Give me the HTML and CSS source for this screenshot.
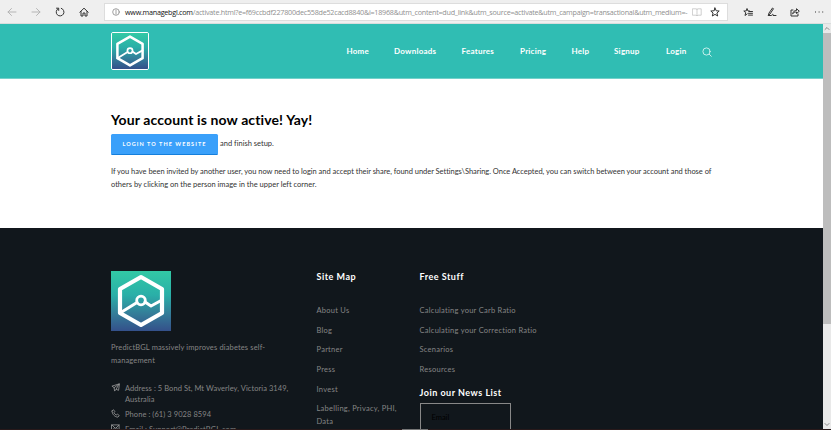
FILE: index.html
```html
<!DOCTYPE html>
<html lang="en">
<head>
<meta charset="utf-8">
<title>Account active</title>
<link rel="stylesheet" href="styles.css">
</head>
<body>
<svg class="defs" width="0" height="0">
  <defs>
    <linearGradient id="brand" x1="0" y1="0" x2="0" y2="1">
      <stop offset="0" stop-color="#32c9a5"/><stop offset=".4" stop-color="#2aafa8"/><stop offset=".72" stop-color="#347b98"/><stop offset="1" stop-color="#34508a"/>
    </linearGradient>
    <symbol id="logo" viewBox="0 0 60 60">
      <rect width="60" height="60" fill="url(#brand)"/>
      <g fill="none" stroke="#fff" stroke-linejoin="round">
        <path stroke-width="4.2" d="M30 6 51 18V42L30 54 9 42V18Z"/>
        <path stroke-width="3" d="M9 42 26 31.500M34 31 40 35 51 29"/>
        <circle cx="30" cy="29.500" r="4.300" stroke-width="2.800"/>
      </g>
    </symbol>
  </defs>
</svg>
<header class="browser">
  <div class="controls">
    <svg viewBox="0 0 10 10"><path class="dim" d="M9 5H1M4.500 1.500 1 5l3.500 3.500"/></svg>
    <svg viewBox="0 0 10 10"><path class="dim" d="M1 5h8M5.500 1.500 9 5 5.500 8.500"/></svg>
    <svg viewBox="0 0 10 10"><path d="M3 1.700A3.900 3.900 0 1 0 6.300 1.300M1.500 1.200H3.700V3.400"/></svg>
    <svg viewBox="0 0 10 10"><path d="M.8 5.200 5 1.200l4.200 4M2 4.500V9h2V6h2v3h2V4.500"/></svg>
  </div>
  <div class="address">
    <svg class="info" viewBox="0 0 8 8"><circle cx="4" cy="4" r="3.300"/><path d="M4 3.500V6M4 2v.7"/></svg>
    <div class="url"><span class="host">www.managebgl.com</span><span class="path">/activate.html?e=f69ccbdf227800dec558de52cacd8840&amp;i=18968&amp;utm_content=dud_link&amp;utm_source=activate&amp;utm_campaign=transactional&amp;utm_medium=-</span></div>
    <svg class="book" viewBox="0 0 10 10"><path d="M5 2v6.500M.8 1.800H4l1 .7 1-.7h3.200v6.400H6l-1 .6-1-.6H.8Z"/></svg>
    <svg class="star" viewBox="0 0 10 10"><path d="m5 1 1.200 2.800 3 .2-2.300 2 .8 3L5 7.400 2.300 9l.8-3L.8 4l3-.2Z"/></svg>
  </div>
  <div class="tools">
    <svg viewBox="0 0 10 10"><path d="M6.500 4H5L4 1.500 3.100 4H.8l1.900 1.700L2 8.500l2.200-1.600M6 4.500h3.500M5.500 6.300h4M5.500 8.100h4"/></svg>
    <svg viewBox="0 0 10 10"><path d="M1.300 8.500 2 6 5.500 1l1 .7L3 7 1.300 8.500h3.200C5.500 6.700 6.500 7 6 8.500h3"/></svg>
    <svg viewBox="0 0 10 10"><path d="M3 3H1v6h7V7M2.800 6.500C3 4.500 4.500 3.500 6.500 3.500V1.700L9.300 4.200 6.500 6.500V5C5 5 3.800 5.500 2.800 6.500Z"/></svg>
    <svg viewBox="0 0 10 10"><path class="dots" d="M1 5h1M4.600 5h1M8.200 5h1"/></svg>
  </div>
</header>
<div class="viewport">
  <div class="page">
    <nav class="navbar">
      <svg class="mark"><use href="#logo"/></svg>
      <div class="menu"><a>Home</a><a>Downloads</a><a>Features</a><a>Pricing</a><a>Help</a><a>Signup</a><a>Login</a>
        <svg class="search" viewBox="0 0 10 10"><circle cx="4.500" cy="4.500" r="3.600"/><path d="m7.300 7.300 2 2"/></svg>
      </div>
    </nav>
    <main>
      <h1>Your account is now active! Yay!</h1>
      <div class="action"><a class="button"><span>LOGIN TO THE WEBSITE</span></a><span class="setup">and finish setup.</span></div>
      <p><span class="first">If you have been invited by another user, you now need to login and accept their share, found under Settings\Sharing. Once Accepted, you can switch between your account and those of</span><br><span class="second">others by clicking on the person image in the upper left corner.</span></p>
    </main>
    <footer>
      <section class="about">
        <svg class="biglogo"><use href="#logo"/></svg>
        <p>PredictBGL massively improves diabetes self-<br>management</p>
        <ul>
          <li><svg viewBox="0 0 10 10"><path d="M9 1 1 3.500l2.500 1.700L4 9l1.700-2L8 8ZM3.500 5.200 9 1 5.700 7"/></svg><span>Address : 5 Bond St, Mt Waverley, Victoria 3149,<br>Australia</span></li>
          <li><svg viewBox="0 0 10 10"><path d="M1.200 2.200 2.800.8 4.300 3 3.200 4.200 5.700 6.800 7 5.700 9.200 7.200 7.800 9C4.500 9.200.8 5.500 1.200 2.200Z"/></svg><span>Phone : (61) 3 9028 8594</span></li>
          <li><svg viewBox="0 0 10 10"><path d="M1 1h8v7H1ZM1 1l4 4 4-4M1 8l3-4M9 8 6 4"/></svg><span>Email : Support@PredictBGL.com</span></li>
        </ul>
      </section>
      <section class="sitemap">
        <h2>Site Map</h2>
        <div class="links"><a>About Us</a><a>Blog</a><a>Partner</a><a>Press</a><a>Invest</a><a>Labelling, Privacy, PHI,<br>Data</a></div>
      </section>
      <section class="free">
        <h2>Free Stuff</h2>
        <div class="links"><a>Calculating your Carb Ratio</a><a>Calculating your Correction Ratio</a><a>Scenarios</a><a>Resources</a></div>
        <h2 class="news">Join our News List</h2>
        <div class="field">Email</div>
      </section>
    </footer>
  </div>
  <aside class="scroll">
    <svg viewBox="0 0 8 9"><path d="m2 5.500 2-2 2 2"/></svg>
    <div class="thumb"></div>
    <svg viewBox="0 0 8 9"><path d="m2 3.500 2 2 2-2"/></svg>
  </aside>
</div>
<div class="edge"></div>
</body>
</html>
```
FILE: styles.css
```css
* { box-sizing: border-box; }
body { margin: 0; width: 831px; height: 430px; overflow: hidden; display: flex; flex-direction: column; background: #fff; font-family: Lato, sans-serif; font-size: 7.5px; white-space: nowrap; font-variant-ligatures: none; }
h1, h2, p, ul { margin: 0; padding: 0; }
svg { flex: none; fill: none; stroke-linecap: round; stroke-linejoin: round; }
.defs { position: absolute; }

.browser { height: 24px; flex: none; display: flex; align-items: center; background: #efefef; border-bottom: 1px solid #d9dddd; }
.browser svg { width: 10px; height: 10px; stroke: #333; stroke-width: 1; }
.browser .dim { stroke: #b5b5b5; }
.controls { width: 104px; padding-left: 7px; display: flex; gap: 13.9px; }
.address { width: 624px; height: 18px; padding: 0 7px; display: flex; align-items: center; background: #fff; border: 1px solid #ddd; }
.browser .info { width: 8px; height: 8px; stroke: #888; stroke-width: .8; }
.url { width: 564px; margin-left: 5px; font: 7.2px "Open Sans", sans-serif; }
.host { color: #111; letter-spacing: -.25px; }
.path { color: #909090; letter-spacing: -.245px; }
.browser .book { margin-left: 4px; stroke: #bbb; stroke-width: .7; }
.star { margin-left: 8px; }
.tools { padding-left: 15px; display: flex; gap: 13.7px; }
.browser .dots { stroke-width: 1.1; stroke-linecap: butt; }

.viewport { height: 405px; flex: none; display: flex; }
.page { width: 823px; overflow: hidden; }
.navbar { height: 55px; padding-left: 111px; display: flex; align-items: center; background: #30bdb3; border-bottom: 1px solid #73d1ca; }
.mark { width: 38px; height: 38px; border: 1.5px solid #fff; border-radius: 2px; }
.menu { margin-left: 197.500px; display: grid; grid-template-columns: 47.500px 67.500px 58.500px 51.500px 42.500px 52px 36px 10px; align-items: center; color: #fff; font-size: 8px; font-weight: 700; letter-spacing: .24px; }
.search { width: 10px; height: 10px; margin-top: 2px; stroke: #d5f4f0; stroke-width: .9; }

main { height: 149px; padding: 32px 0 0 111px; color: #333; }
h1 { color: #000; font-size: 14px; line-height: 18px; font-weight: 700; letter-spacing: .12px; }
.action { margin-top: 5px; display: flex; align-items: flex-start; line-height: 19px; }
.button { width: 107px; height: 21px; margin-right: 2px; display: flex; justify-content: center; background: #3aa0fa; border-bottom: 1.500px solid #157fdc; border-radius: 1.500px; color: #fff; font-size: 5.500px; font-weight: 700; letter-spacing: 1.07px; line-height: 20px; }
main p { margin-top: 10px; line-height: 13px; }
.first { letter-spacing: -.034px; }

footer { height: 202px; padding: 43px 0 0 111px; display: flex; background: #11171c; color: #858585; overflow: hidden; }
.about { width: 205.500px; }
.biglogo { display: block; width: 60px; height: 60px; }
.about p { margin-top: 10px; line-height: 13px; letter-spacing: .14px; }
.about ul { margin-top: 16px; list-style: none; letter-spacing: .07px; }
.about li { display: flex; gap: 5px; line-height: 11px; margin-bottom: 4px; }
.about li svg { width: 9px; height: 9px; stroke: #999; stroke-width: .9; }
.sitemap { width: 103px; }
h2 { color: #fff; font-size: 9px; line-height: 12px; font-weight: 700; letter-spacing: .5px; }
.links { margin-top: 21px; display: grid; gap: 6.700px; line-height: 13px; letter-spacing: .26px; }
.news { margin-top: 11px; }
.field { width: 91px; height: 40px; margin-top: 4px; padding: 9px 11px; border: 1px solid #888; color: #000; }

.scroll { width: 8px; display: flex; flex-direction: column; background: #e9e9e9; }
.scroll svg { width: 8px; height: 9px; stroke: #888; stroke-width: 1; }
.thumb { height: 291px; margin-bottom: auto; background: #bdbdbd; }
.edge { height: 1px; background: linear-gradient(to right, #28191a 402px, #777 402px 428px, #28191a 428px); }
```
